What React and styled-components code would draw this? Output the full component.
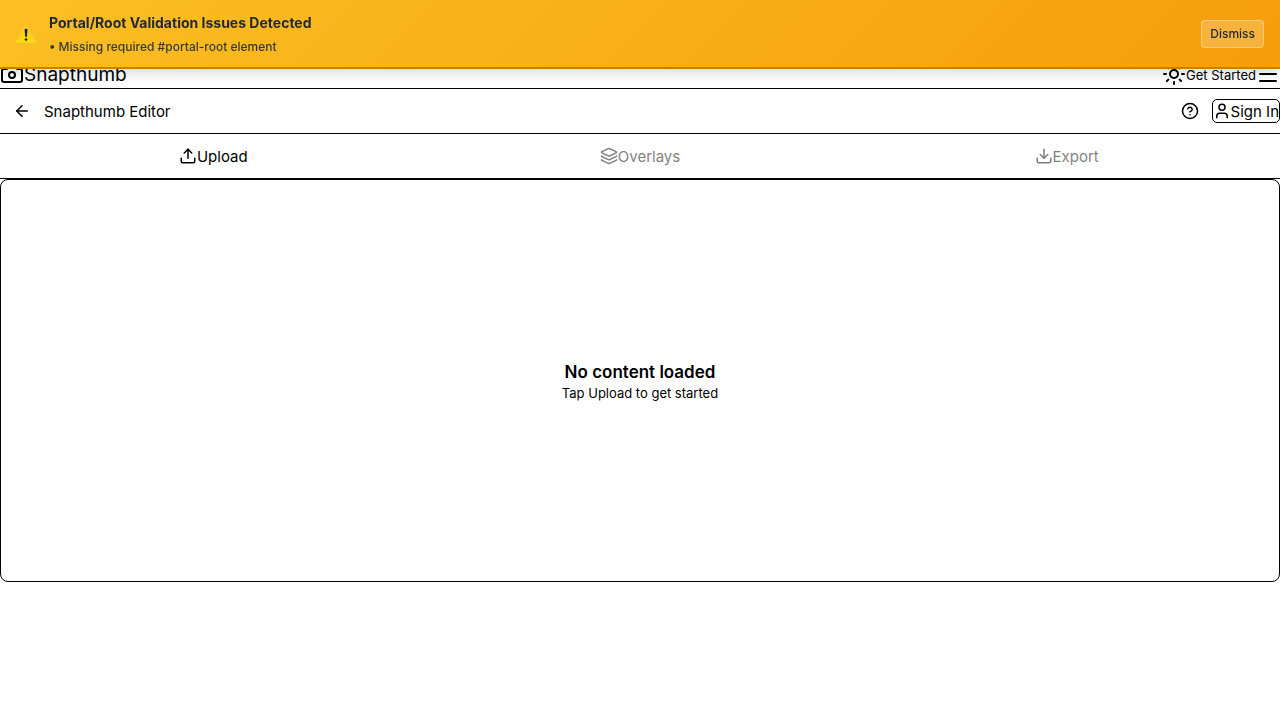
import React, { useState } from "react";
import styled, { createGlobalStyle, css } from "styled-components";
import { ArrowLeft, CircleQuestionMark, User, Upload, Layers, Download, Camera, Sun, Menu } from "lucide-react";

const GlobalStyle = createGlobalStyle`
  *, *::before, *::after { box-sizing: border-box; }
  body {
    margin: 0;
    background: #fff;
    color: #000;
    font-family: Inter, "Liberation Sans", sans-serif;
    font-size: 15px;
    line-height: 20px;
  }
  h1, h2, p, ul { margin: 0; padding: 0; }
  button { font: inherit; color: inherit; background: none; border: 0; padding: 0; cursor: pointer; }
  a { color: inherit; text-decoration: none; }
  svg { display: block; flex: none; }
`;

const Banner = styled.aside`
  position: fixed;
  top: 0;
  left: 0;
  right: 0;
  z-index: 10;
  display: flex;
  align-items: center;
  gap: 12px;
  padding: 12px 16px;
  background: linear-gradient(135deg, #fbbf24, #f59e0b);
  border-bottom: 2px solid #d97706;
  box-shadow: 0 4px 12px rgba(0, 0, 0, 0.15);
  color: #1f2937;
`;

const BannerBody = styled.div`
  flex: 1;
`;

const BannerTitle = styled.h2`
  font-size: 14px;
  font-weight: 700;
  line-height: 21px;
  margin-bottom: 6px;
`;

const IssueList = styled.ul`
  list-style: none;
  font-size: 12px;
  font-weight: 500;
  line-height: 16px;
  opacity: 0.9;
`;

const DismissButton = styled.button`
  padding: 4px 8px;
  border: 1px solid rgba(255, 255, 255, 0.3);
  border-radius: 4px;
  background: rgba(255, 255, 255, 0.2);
  font-size: 12px;
  font-weight: 500;
  line-height: 18px;
`;

const Label = styled.span`
  padding-top: 2px;
`;

const SiteHeader = styled.header`
  display: flex;
  align-items: center;
  justify-content: space-between;
  padding-top: 60px;
  height: 89px;
  border-bottom: 1px solid #000;
`;

const Brand = styled.a`
  display: flex;
  align-items: center;
  font-size: 19px;
`;

const SiteNav = styled.nav`
  display: flex;
  align-items: center;
  font-size: 13px;
`;

const NavLink = styled.a`
  padding-top: 2px;
`;

const Toolbar = styled.div`
  display: flex;
  align-items: center;
  justify-content: space-between;
  height: 45px;
  border-bottom: 1px solid #000;
`;

const ToolbarGroup = styled.div`
  display: flex;
  align-items: center;
`;

const IconButton = styled.button`
  display: flex;
  align-items: center;
  justify-content: center;
  width: ${(p) => (p.$compact ? 24 : 44)}px;
  height: ${(p) => (p.$compact ? 24 : 44)}px;
`;

const ToolbarTitle = styled.h1`
  font-size: 15px;
  font-weight: 400;
  padding-top: 2px;
`;

const SignInButton = styled.button`
  display: flex;
  align-items: center;
  height: 24px;
  border: 1px solid #000;
  border-radius: 5px;
`;

const Tabs = styled.div`
  display: grid;
  grid-template-columns: repeat(3, 1fr);
  border-bottom: 1px solid #000;
`;

const Tab = styled.button`
  display: flex;
  align-items: center;
  justify-content: center;
  height: 44px;
  ${(p) => p.disabled && css`
    color: #000;
    opacity: 0.5;
    cursor: default;
  `}
`;

const Canvas = styled.main`
  display: flex;
  flex-direction: column;
  align-items: center;
  justify-content: center;
  height: 56vh;
  border: 1px solid #000;
  border-radius: 8px;
`;

const EmptyTitle = styled.h2`
  font-size: 17px;
  font-weight: 600;
  line-height: 24px;
`;

const EmptyHint = styled.p`
  font-size: 13px;
  line-height: 18px;
`;

function WarningIcon() {
  return (
    <svg width="21" height="20" viewBox="0 0 21 20" aria-hidden="true">
      <defs>
        <linearGradient id="warning-fill" x1="0" y1="0" x2="0" y2="1">
          <stop offset="0" stopColor="#fdc41a" />
          <stop offset="1" stopColor="#ffdf0c" />
        </linearGradient>
      </defs>
      <path d="M9.2 2a1 1 0 0 1 1.7 0l8.9 15.5a.9.9 0 0 1-.8 1.3H1.1a.9.9 0 0 1-.8-1.3z" fill="url(#warning-fill)" stroke="#f6c95a" strokeWidth=".6" />
      <path d="M8.6 5.2q1.4-.9 2.9 0l-.6 7.6H9.2z" fill="#1c1c1c" />
      <circle cx="10.05" cy="15.5" r="1.3" fill="#1c1c1c" />
    </svg>
  );
}

export default function App() {
  const [showBanner, setShowBanner] = useState(true);
  return (
    <>
      <GlobalStyle />
      {showBanner && (
        <Banner role="alert">
          <WarningIcon />
          <BannerBody>
            <BannerTitle>Portal/Root Validation Issues Detected</BannerTitle>
            <IssueList>
              <li>• Missing required #portal-root element</li>
            </IssueList>
          </BannerBody>
          <DismissButton onClick={() => setShowBanner(false)}>Dismiss</DismissButton>
        </Banner>
      )}
      <SiteHeader>
        <Brand href="#">
          <Camera size={24} />
          <Label>Snapthumb</Label>
        </Brand>
        <SiteNav>
          <Sun size={24} />
          <NavLink href="#start">Get Started</NavLink>
          <IconButton $compact aria-label="Menu"><Menu size={24} /></IconButton>
        </SiteNav>
      </SiteHeader>
      <Toolbar>
        <ToolbarGroup>
          <IconButton aria-label="Back"><ArrowLeft size={18} /></IconButton>
          <ToolbarTitle>Snapthumb Editor</ToolbarTitle>
        </ToolbarGroup>
        <ToolbarGroup>
          <IconButton aria-label="Help"><CircleQuestionMark size={18} /></IconButton>
          <SignInButton><User size={18} /><Label>Sign In</Label></SignInButton>
        </ToolbarGroup>
      </Toolbar>
      <Tabs>
        <Tab><Upload size={18} /><Label>Upload</Label></Tab>
        <Tab disabled><Layers size={18} /><Label>Overlays</Label></Tab>
        <Tab disabled><Download size={18} /><Label>Export</Label></Tab>
      </Tabs>
      <Canvas>
        <EmptyTitle>No content loaded</EmptyTitle>
        <EmptyHint>Tap Upload to get started</EmptyHint>
      </Canvas>
    </>
  );
}
